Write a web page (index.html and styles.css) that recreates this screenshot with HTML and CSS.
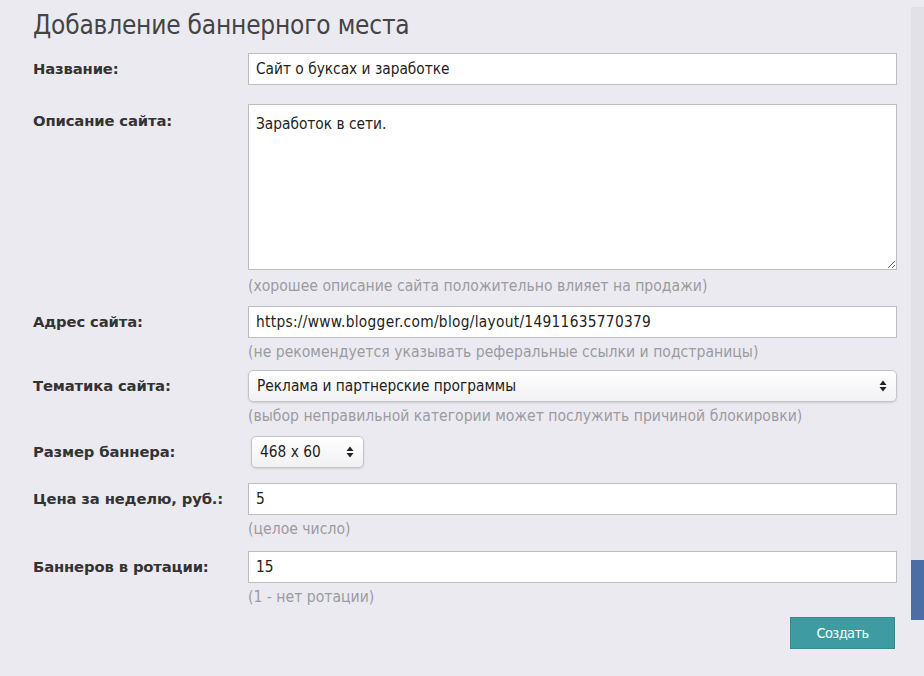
FILE: index.html
```
<!DOCTYPE html>
<html lang="ru">
<head>
<meta charset="utf-8">
<title>Добавление баннерного места</title>
<link rel="stylesheet" href="styles.css">
</head>
<body>
<div class="page">
  <main class="content">
    <h1 class="title">Добавление баннерного места</h1>
    <form class="form">
      <div class="row row-plain row-first">
        <label class="label">Название:</label>
        <div class="field">
          <input class="input" type="text" value="Сайт о буксах и заработке">
        </div>
      </div>
      <div class="row row-desc">
        <label class="label label-top">Описание сайта:</label>
        <div class="field">
          <textarea class="textarea">Заработок в сети.</textarea>
          <div class="hint hint-desc">(хорошее описание сайта положительно влияет на продажи)</div>
        </div>
      </div>
      <div class="row row-tight">
        <label class="label">Адрес сайта:</label>
        <div class="field">
          <input class="input input-url" type="text" value="https://www.blogger.com/blog/layout/14911635770379">
          <div class="hint">(не рекомендуется указывать реферальные ссылки и подстраницы)</div>
        </div>
      </div>
      <div class="row">
        <label class="label">Тематика сайта:</label>
        <div class="field">
          <div class="select-wrap">
            <select class="select"><option>Реклама и партнерские программы</option></select>
            <svg class="arrows" width="8" height="12" viewBox="0 0 8 12"><path d="M4 0.5 L7.5 5 H0.5 Z M4 11.5 L7.5 7 H0.5 Z" fill="#222"/></svg>
          </div>
          <div class="hint">(выбор неправильной категории может послужить причиной блокировки)</div>
        </div>
      </div>
      <div class="row row-plain row-size">
        <label class="label">Размер баннера:</label>
        <div class="field">
          <div class="select-wrap select-small">
            <select class="select"><option>468 x 60</option></select>
            <svg class="arrows" width="8" height="12" viewBox="0 0 8 12"><path d="M4 0.5 L7.5 5 H0.5 Z M4 11.5 L7.5 7 H0.5 Z" fill="#222"/></svg>
          </div>
        </div>
      </div>
      <div class="row row-price">
        <label class="label">Цена за неделю, руб.:</label>
        <div class="field">
          <input class="input" type="text" value="5">
          <div class="hint">(целое число)</div>
        </div>
      </div>
      <div class="row">
        <label class="label">Баннеров в ротации:</label>
        <div class="field">
          <input class="input" type="text" value="15">
          <div class="hint">(1 - нет ротации)</div>
        </div>
      </div>
      <div class="actions">
        <button class="btn" type="button">Создать</button>
      </div>
    </form>
  </main>
  <aside class="side">
    <div class="side-panel"></div>
    <div class="side-tab"></div>
  </aside>
</div>
</body>
</html>
```
FILE: styles.css
```
html, body {
  margin: 0;
  padding: 0;
  background: #ebeaf1;
  height: 100%;
}
body {
  font-family: "DejaVu Sans Condensed", "DejaVu Sans", sans-serif;
  color: #333;
}
.page {
  display: flex;
  height: 676px;
  overflow: hidden;
}
.content {
  width: 864px;
  padding-left: 33px;
  padding-right: 14px;
}
.title {
  margin: 10px 0 13px;
  font-family: "DejaVu Sans Condensed", "DejaVu Sans", sans-serif;
  font-size: 26px;
  line-height: 30px;
  font-weight: normal;
  color: #444;
  letter-spacing: -0.2px;
}
.form {
  display: flex;
  flex-direction: column;
}
.row {
  display: grid;
  grid-template-columns: 215px 649px;
  margin-bottom: 10px;
}
.row-plain {
  padding-bottom: 7px;
}
.row-first {
  padding-bottom: 9px;
}
.row-size {
  padding-bottom: 5px;
}
.row-tight {
  margin-bottom: 8px;
}
.row-price {
  margin-bottom: 12px;
}
.label {
  font-family: "DejaVu Sans", sans-serif;
  font-size: 14.8px;
  font-weight: bold;
  color: #333;
  line-height: 32px;
  letter-spacing: -0.15px;
}
.label-top {
  line-height: 20px;
  padding-top: 7px;
}
.field {
  display: flex;
  flex-direction: column;
}
.input, .textarea {
  box-sizing: border-box;
  width: 649px;
  border: 1px solid #bdbdbd;
  background: #fff;
  font-family: "DejaVu Sans Condensed", "DejaVu Sans", sans-serif;
  font-size: 15.3px;
  color: #222;
  margin: 0;
  outline: none;
  border-radius: 0;
}
.input {
  height: 32px;
  padding: 0 7px;
}
.input-url {
  letter-spacing: 0.3px;
}
.textarea {
  height: 166px;
  padding: 10px 7px 7px;
  resize: vertical;
  display: block;
  line-height: 18px;
}
.hint {
  margin-top: 4px;
  font-size: 15.6px;
  line-height: 20px;
  color: #9b9b9f;
}
.hint-desc {
  margin-top: 6px;
}
.select-wrap {
  position: relative;
  width: 649px;
}
.select-small {
  width: 113px;
  margin-left: 3px;
}
.select {
  -webkit-appearance: none;
  appearance: none;
  box-sizing: border-box;
  width: 100%;
  height: 32px;
  padding: 0 24px 0 8px;
  border: 1px solid #c4c4c7;
  border-radius: 5px;
  background: linear-gradient(#ffffff, #f1f1f3);
  box-shadow: 0 1px 2px rgba(0, 0, 0, 0.12);
  font-family: "DejaVu Sans Condensed", "DejaVu Sans", sans-serif;
  font-size: 15.3px;
  color: #222;
  margin: 0;
  outline: none;
}
.arrows {
  position: absolute;
  right: 10px;
  top: 10px;
}
.actions {
  display: flex;
  justify-content: flex-end;
  width: 862px;
  margin-top: 0;
}
.btn {
  width: 105px;
  height: 32px;
  border: 1px solid #348a90;
  background: #3d9ba1;
  color: #fff;
  font-family: "DejaVu Sans Condensed", "DejaVu Sans", sans-serif;
  font-size: 14.5px;
  letter-spacing: -0.6px;
  cursor: pointer;
  padding: 0;
}
.side {
  width: 13px;
  padding-top: 7px;
  display: flex;
  flex-direction: column;
}
.side-panel {
  height: 553px;
  background: #e2e1e8;
}
.side-tab {
  height: 60px;
  background: #4b6ea5;
}
```
